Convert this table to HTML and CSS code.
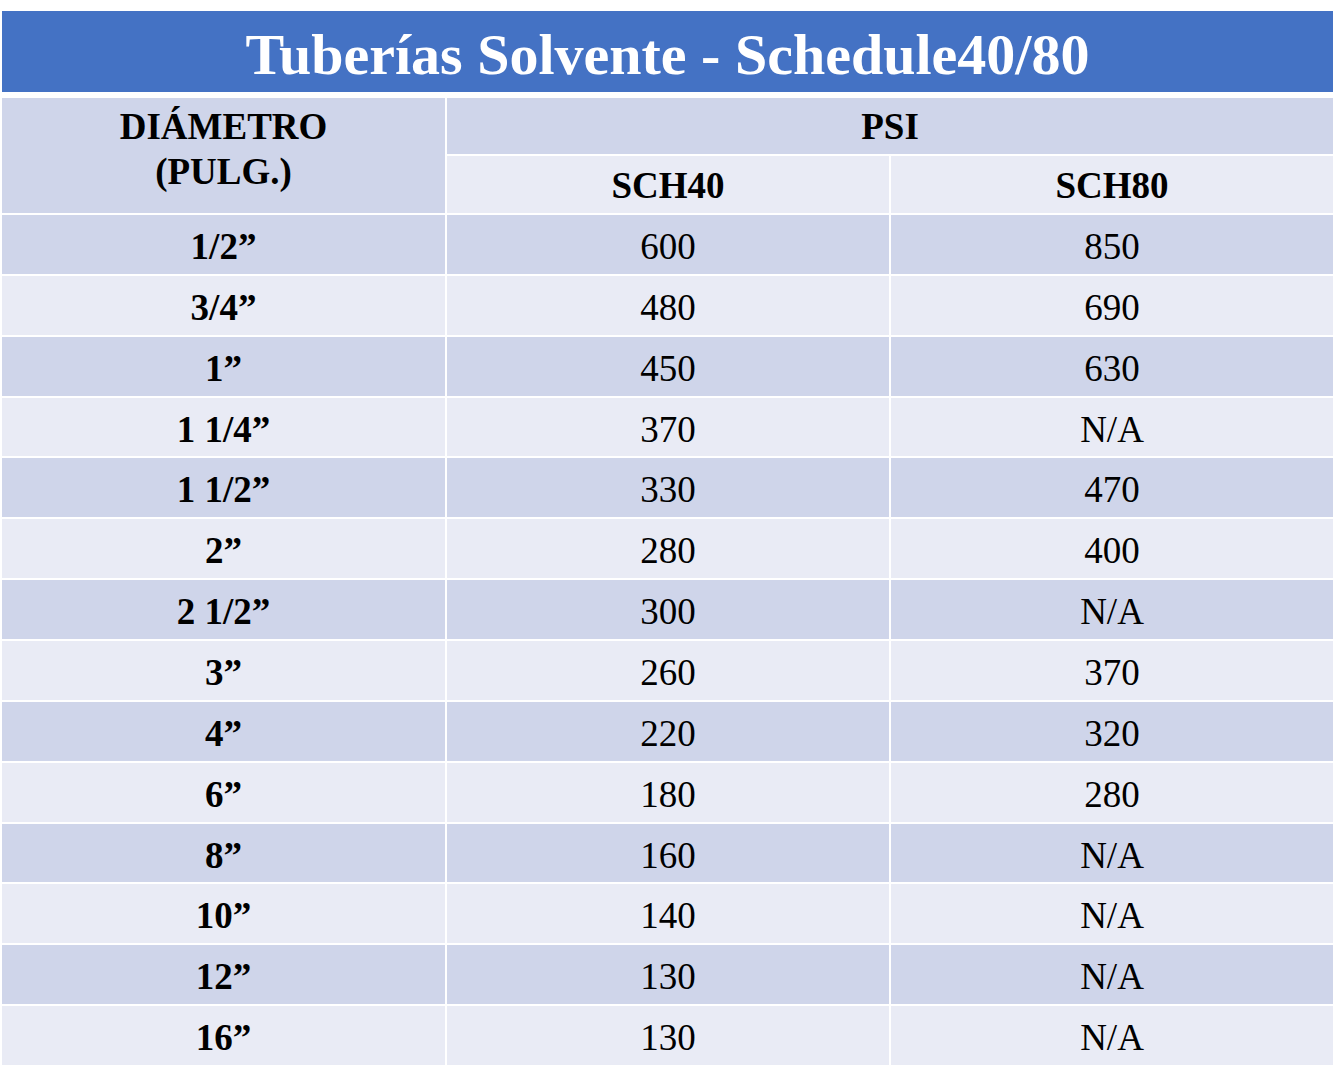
FILE: index.html
```html
<!DOCTYPE html>
<html lang="es">
<head>
<meta charset="utf-8">
<title>Tuberías Solvente - Schedule40/80</title>
<link rel="stylesheet" href="styles.css">
</head>
<body>
<div class="page">
  <div class="title">Tuberías Solvente - Schedule40/80</div>
  <div class="table">
    <div class="cell head diam">DIÁMETRO<br>(PULG.)</div>
    <div class="cell head psi">PSI</div>
    <div class="cell head light">SCH40</div>
    <div class="cell head light">SCH80</div>

    <div class="cell dark b">1/2”</div><div class="cell dark">600</div><div class="cell dark">850</div>
    <div class="cell light b">3/4”</div><div class="cell light">480</div><div class="cell light">690</div>
    <div class="cell dark b">1”</div><div class="cell dark">450</div><div class="cell dark">630</div>
    <div class="cell light b">1 1/4”</div><div class="cell light">370</div><div class="cell light">N/A</div>
    <div class="cell dark b">1 1/2”</div><div class="cell dark">330</div><div class="cell dark">470</div>
    <div class="cell light b">2”</div><div class="cell light">280</div><div class="cell light">400</div>
    <div class="cell dark b">2 1/2”</div><div class="cell dark">300</div><div class="cell dark">N/A</div>
    <div class="cell light b">3”</div><div class="cell light">260</div><div class="cell light">370</div>
    <div class="cell dark b">4”</div><div class="cell dark">220</div><div class="cell dark">320</div>
    <div class="cell light b">6”</div><div class="cell light">180</div><div class="cell light">280</div>
    <div class="cell dark b">8”</div><div class="cell dark">160</div><div class="cell dark">N/A</div>
    <div class="cell light b">10”</div><div class="cell light">140</div><div class="cell light">N/A</div>
    <div class="cell dark b">12”</div><div class="cell dark">130</div><div class="cell dark">N/A</div>
    <div class="cell light b">16”</div><div class="cell light">130</div><div class="cell light">N/A</div>
  </div>
</div>
</body>
</html>
```
FILE: styles.css
```css
html, body {
  margin: 0;
  padding: 0;
  background: #ffffff;
}

body {
  font-family: "Liberation Serif", "Times New Roman", serif;
  color: #000000;
}

.page {
  padding: 11px 0 0 2px;
  width: 1331px;
}

.title {
  height: 81px;
  background: #4472C4;
  color: #ffffff;
  font-weight: bold;
  font-size: 58px;
  display: flex;
  align-items: center;
  justify-content: center;
  padding-top: 6px;
  box-sizing: border-box;
}

.table {
  margin-top: 6px;
  display: grid;
  grid-template-columns: 443px 442px 442px;
  grid-template-rows: 56px 57px repeat(14, 58.86px);
  gap: 2px;
  font-size: 37px;
}

.cell {
  display: flex;
  align-items: center;
  justify-content: center;
  text-align: center;
  padding-top: 4px;
  box-sizing: border-box;
}

.head {
  font-weight: bold;
  padding-top: 1px;
}

.diam {
  grid-row: 1 / span 2;
  grid-column: 1;
  align-items: flex-start;
  line-height: 45px;
  padding-top: 6px;
  background: #CFD5EA;
}

.psi {
  grid-column: 2 / span 2;
  background: #CFD5EA;
}

.dark {
  background: #CFD5EA;
}

.light {
  background: #E9EBF5;
}

.b {
  font-weight: bold;
}
```
